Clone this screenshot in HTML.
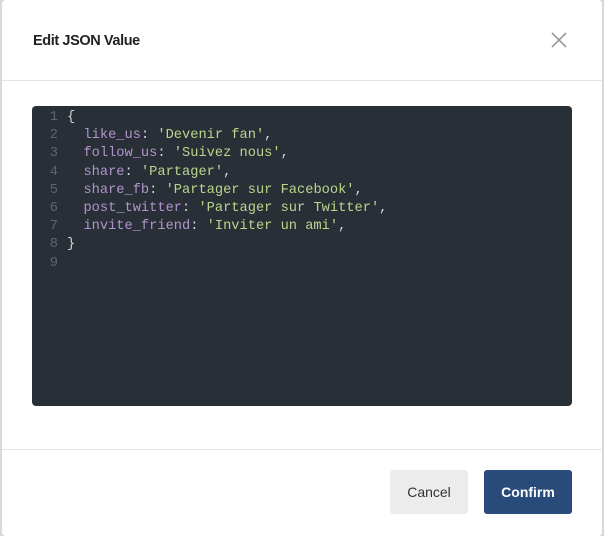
<!DOCTYPE html>
<html><head><meta charset="utf-8"><style>
*{box-sizing:border-box;margin:0;padding:0}
body{width:604px;height:536px;background:#d9d9d9;font-family:"Liberation Sans",sans-serif;position:relative;overflow:hidden}
.modal{position:absolute;left:2px;top:0;width:600px;height:536px;background:#fff;border-radius:4px}
.title{position:absolute;left:31px;top:33px;font-size:14.5px;letter-spacing:-0.4px;font-weight:bold;color:#222}
.close{position:absolute;left:549px;top:32px}
.hr{position:absolute;left:0;width:600px;height:1px;background:#e2e2e2}
.ed{position:absolute;left:30px;top:106px;width:540px;height:300px;background:#282f36;border-radius:4px;font-family:"Liberation Mono",monospace;font-size:13.7px;line-height:18.2px;padding-top:3px;color:#d6d6d6;white-space:pre}
.ln{display:inline-block;width:26px;text-align:right;color:#5c666f;margin-right:9px}
.k{color:#b294cc}.s{color:#bcd58d}
.btn{position:absolute;top:470px;height:44px;border-radius:3px;font-size:14px;display:flex;align-items:center;justify-content:center}
</style></head><body>
<div class="modal">
<div class="title">Edit JSON Value</div>
<svg class="close" width="16" height="16" viewBox="0 0 16 16"><path d="M1 1L15 15M15 1L1 15" stroke="#999" stroke-width="1.6"/></svg>
<div class="hr" style="top:80px"></div>
<div class="ed"><span class="ln">1</span>{
<span class="ln">2</span>  <span class="k">like_us</span>: <span class="s">'Devenir fan'</span>,
<span class="ln">3</span>  <span class="k">follow_us</span>: <span class="s">'Suivez nous'</span>,
<span class="ln">4</span>  <span class="k">share</span>: <span class="s">'Partager'</span>,
<span class="ln">5</span>  <span class="k">share_fb</span>: <span class="s">'Partager sur Facebook'</span>,
<span class="ln">6</span>  <span class="k">post_twitter</span>: <span class="s">'Partager sur Twitter'</span>,
<span class="ln">7</span>  <span class="k">invite_friend</span>: <span class="s">'Inviter un ami'</span>,
<span class="ln">8</span>}
<span class="ln">9</span></div>
<div class="hr" style="top:449px"></div>
<div class="btn" style="left:388px;width:78px;background:#ececec;color:#333">Cancel</div>
<div class="btn" style="left:482px;width:88px;background:#284b7a;color:#fff;font-weight:bold">Confirm</div>
</div>
</body></html>
